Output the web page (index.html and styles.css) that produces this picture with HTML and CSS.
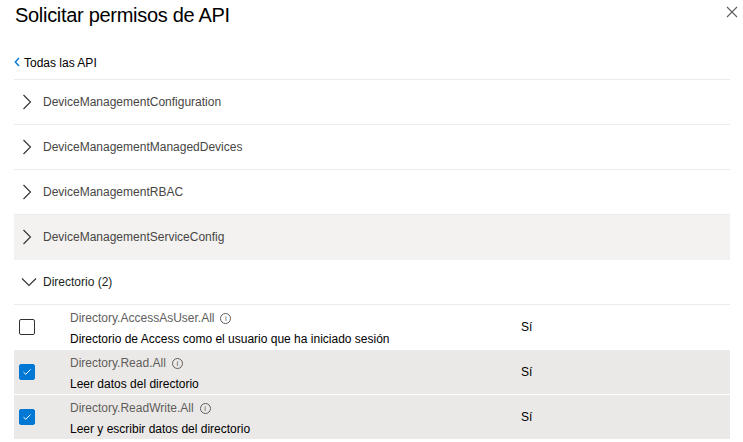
FILE: index.html
```html
<!DOCTYPE html>
<html lang="es">
<head>
<meta charset="utf-8">
<title>Solicitar permisos de API</title>
<link rel="stylesheet" href="styles.css">
</head>
<body>
<div class="panel">
  <header class="header">
    <h1 class="title">Solicitar permisos de API</h1>
    <button class="close" aria-label="Cerrar">
      <svg width="12" height="12" viewBox="0 0 12 12"><path d="M1 1 L11 11 M11 1 L1 11" stroke="#605e5c" stroke-width="1.1" fill="none"/></svg>
    </button>
  </header>
  <div class="back">
    <svg class="back-icon" width="6" height="10" viewBox="0 0 6 10"><path d="M5 1 L1.3 5 L5 9" stroke="#0078d4" stroke-width="1.4" fill="none"/></svg>
    <span>Todas las API</span>
  </div>
  <div class="list">
    <div class="group">
      <svg class="chev" width="10" height="16" viewBox="0 0 10 16"><path d="M1.5 1 L8.5 8 L1.5 15" stroke="#323130" stroke-width="1.1" fill="none"/></svg>
      <span>DeviceManagementConfiguration</span>
    </div>
    <div class="group">
      <svg class="chev" width="10" height="16" viewBox="0 0 10 16"><path d="M1.5 1 L8.5 8 L1.5 15" stroke="#323130" stroke-width="1.1" fill="none"/></svg>
      <span>DeviceManagementManagedDevices</span>
    </div>
    <div class="group">
      <svg class="chev" width="10" height="16" viewBox="0 0 10 16"><path d="M1.5 1 L8.5 8 L1.5 15" stroke="#323130" stroke-width="1.1" fill="none"/></svg>
      <span>DeviceManagementRBAC</span>
    </div>
    <div class="group hover">
      <svg class="chev" width="10" height="16" viewBox="0 0 10 16"><path d="M1.5 1 L8.5 8 L1.5 15" stroke="#323130" stroke-width="1.1" fill="none"/></svg>
      <span>DeviceManagementServiceConfig</span>
    </div>
    <div class="group open">
      <svg class="chev-down" width="16" height="10" viewBox="0 0 16 10"><path d="M1 1.5 L8 8.5 L15 1.5" stroke="#323130" stroke-width="1.1" fill="none"/></svg>
      <span class="dir">Directorio (2)</span>
    </div>
    <div class="perm">
      <span class="cb"></span>
      <div class="perm-text">
        <div class="perm-name">Directory.AccessAsUser.All <span class="info">i</span></div>
        <div class="perm-desc">Directorio de Access como el usuario que ha iniciado sesión</div>
      </div>
      <div class="perm-admin">Sí</div>
    </div>
    <div class="perm selected">
      <span class="cb checked"><svg width="10" height="8" viewBox="0 0 10 8"><path d="M1.5 4.2 L3.8 6.3 L8.5 1.5" stroke="#fff" stroke-width="1" fill="none"/></svg></span>
      <div class="perm-text">
        <div class="perm-name">Directory.Read.All <span class="info">i</span></div>
        <div class="perm-desc">Leer datos del directorio</div>
      </div>
      <div class="perm-admin">Sí</div>
    </div>
    <div class="perm selected">
      <span class="cb checked"><svg width="10" height="8" viewBox="0 0 10 8"><path d="M1.5 4.2 L3.8 6.3 L8.5 1.5" stroke="#fff" stroke-width="1" fill="none"/></svg></span>
      <div class="perm-text">
        <div class="perm-name">Directory.ReadWrite.All <span class="info">i</span></div>
        <div class="perm-desc">Leer y escribir datos del directorio</div>
      </div>
      <div class="perm-admin">Sí</div>
    </div>
  </div>
</div>
</body>
</html>
```

FILE: styles.css
```css
* { box-sizing: border-box; }
html, body { margin: 0; padding: 0; background: #fff; }
body {
  font-family: "Liberation Sans", Arial, sans-serif;
  color: #323130;
  width: 743px;
  height: 442px;
  overflow: hidden;
}
.panel { padding: 0 13px 0 14px; }
.header {
  display: flex;
  align-items: flex-start;
  justify-content: space-between;
  height: 50px;
}
.title {
  margin: 2px 0 0 1px;
  font-weight: normal;
  font-size: 20px;
  line-height: 26px;
  letter-spacing: -0.3px;
  color: #000;
}
.close {
  border: 0;
  background: none;
  padding: 0;
  margin: 6px -8px 0 0;
  width: 12px;
  height: 12px;
  display: flex;
}
.back {
  display: flex;
  align-items: center;
  gap: 4px;
  height: 30px;
  border-bottom: 1px solid #edebe9;
  font-size: 12px;
  color: #000;
  padding-bottom: 4px;
}
.back-icon { margin-top: -1px; }
.list { display: flex; flex-direction: column; }
.group {
  display: flex;
  align-items: center;
  height: 45px;
  border-bottom: 1px solid #edebe9;
  font-size: 12px;
  color: #484644;
  padding-left: 8px;
}
.group .chev { margin-right: 11px; }
.group.hover { background: #f3f2f1; border-bottom-color: #f3f2f1; }
.group.open { padding-left: 7px; }
.chev-down { margin-right: 6px; }
.dir { color: #201f1e; }
.perm {
  display: flex;
  align-items: center;
  height: 45px;
  border-bottom: 1px solid #fff;
}
.perm.selected { background: #ebe9e7; }
.cb {
  width: 16px;
  height: 16px;
  margin-left: 5px;
  border: 1px solid #323130;
  border-radius: 2px;
  display: flex;
  align-items: center;
  justify-content: center;
  flex: none;
}
.cb.checked { background: #0078d4; border-color: #0078d4; }
.perm-text {
  margin-left: 35px;
  width: 451px;
  padding-top: 4px;
  display: flex;
  flex-direction: column;
  gap: 6px;
  font-size: 12px;
  line-height: 15px;
}
.perm-name { color: #605e5c; display: flex; align-items: center; gap: 6px; }
.perm-desc { color: #000; }
.info {
  width: 11px;
  height: 11px;
  border: 1px solid #605e5c;
  border-radius: 50%;
  font-size: 8px;
  line-height: 9px;
  text-align: center;
  color: #605e5c;
  display: inline-block;
}
.perm-admin { font-size: 12px; color: #000; }
```
